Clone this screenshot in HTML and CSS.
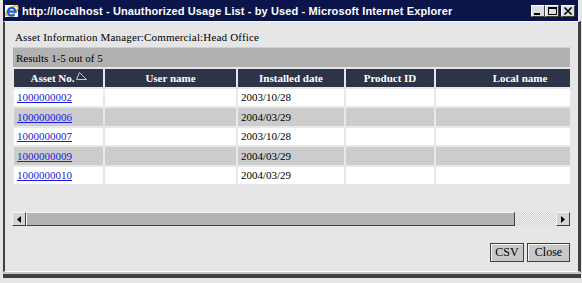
FILE: index.html
```html
<!DOCTYPE html>
<html lang="en">
<head>
  <meta charset="UTF-8" />
  <title>Unauthorized Usage List - by Used</title>
  <link rel="stylesheet" href="styles.css">
</head>
<body>
  <div class="window">
    <!-- Title bar -->
    <div class="titlebar">
      <svg class="app-icon" width="16" height="16" viewBox="0 0 16 16">
        <rect x="1" y="2" width="13" height="12" fill="#ffffff" />
        <ellipse cx="8" cy="8" rx="7.2" ry="3.2" transform="rotate(-35 8 8)" fill="none" stroke="#e0a818" stroke-width="1.3" />
        <path d="M4 8.6h7.6a3.9 3.9 0 1 0 -1.1 2.9" fill="none" stroke="#1f5fd0" stroke-width="2.3" />
      </svg>
      <span class="title">http://localhost - Unauthorized Usage List - by Used - Microsoft Internet Explorer</span>
      <div class="caption-buttons">
        <span class="cbtn">
          <svg width="12" height="10" viewBox="0 0 12 10"><rect x="2" y="7" width="6" height="2" fill="#000" /></svg>
        </span>
        <span class="cbtn">
          <svg width="12" height="10" viewBox="0 0 12 10"><path d="M2.5 1.5h8v7h-8z" fill="none" stroke="#000" /><rect x="2" y="1" width="9" height="2" fill="#000" /></svg>
        </span>
        <span class="cbtn cbtn-close">
          <svg width="12" height="10" viewBox="0 0 12 10"><path d="M2.5 1.5l7 7M9.5 1.5l-7 7" stroke="#000" stroke-width="1.6" /></svg>
        </span>
      </div>
    </div>

    <!-- Page -->
    <div class="client">
      <p class="breadcrumb">Asset Information Manager:Commercial:Head Office</p>
      <div class="results">Results 1-5 out of 5</div>

      <div class="grid-view">
        <table class="grid">
          <colgroup>
            <col class="c-asset" />
            <col class="c-user" />
            <col class="c-date" />
            <col class="c-product" />
            <col class="c-local" />
          </colgroup>
          <thead>
            <tr>
              <th>Asset No.<svg class="sort" width="11" height="8" viewBox="0 0 11 8"><path d="M3.5 0.5L0.5 7.5H10.5Z" fill="none" stroke="#c8c8c8" /></svg></th>
              <th>User name</th>
              <th>Installed date</th>
              <th>Product ID</th>
              <th>Local name</th>
            </tr>
          </thead>
          <tbody>
            <tr>
              <td><a href="#">1000000002</a></td>
              <td></td>
              <td>2003/10/28</td>
              <td></td>
              <td></td>
            </tr>
            <tr>
              <td><a href="#">1000000006</a></td>
              <td></td>
              <td>2004/03/29</td>
              <td></td>
              <td></td>
            </tr>
            <tr>
              <td><a href="#">1000000007</a></td>
              <td></td>
              <td>2003/10/28</td>
              <td></td>
              <td></td>
            </tr>
            <tr>
              <td><a href="#">1000000009</a></td>
              <td></td>
              <td>2004/03/29</td>
              <td></td>
              <td></td>
            </tr>
            <tr>
              <td><a href="#">1000000010</a></td>
              <td></td>
              <td>2004/03/29</td>
              <td></td>
              <td></td>
            </tr>
          </tbody>
        </table>
      </div>

      <!-- Horizontal scrollbar -->
      <div class="hscroll">
        <span class="sb-btn">
          <svg width="4" height="7" viewBox="0 0 4 7"><path d="M4 0v7L0 3.5z" fill="#000" /></svg>
        </span>
        <span class="sb-thumb"></span>
        <span class="sb-track"></span>
        <span class="sb-btn">
          <svg width="4" height="7" viewBox="0 0 4 7"><path d="M0 0v7l4-3.5z" fill="#000" /></svg>
        </span>
      </div>

      <div class="actions">
        <button class="btn btn-csv">CSV</button>
        <button class="btn btn-close">Close</button>
      </div>
    </div>
    <div class="frame-bottom"></div>
  </div>
</body>
</html>
```

FILE: styles.css
```css
/* Classic IE popup window look */
* {
  margin: 0;
  padding: 0;
  box-sizing: border-box;
}
body {
  background: #e6e6e6;
  font-family: 'Liberation Serif', serif;
  font-size: 11px;
  color: #000;
}
.window {
  width: 582px;
  height: 283px;
  display: flex;
  flex-direction: column;
  padding-left: 3px;
  padding-right: 1px;
  background: #e6e6e6;
  overflow: hidden;
}

/* Title bar */
.titlebar {
  height: 21px;
  margin-right: 3px;
  flex-shrink: 0;
  display: flex;
  align-items: center;
  background: #0b154a;
  color: #fff;
}
.app-icon {
  margin-left: 1px;
  flex-shrink: 0;
}
.title {
  margin-left: 2px;
  font-family: 'Liberation Sans', sans-serif;
  font-weight: bold;
  font-size: 11px;
  letter-spacing: 0.12px;
  white-space: nowrap;
}
.caption-buttons {
  margin-left: auto;
  margin-right: 3px;
  display: flex;
}
.cbtn {
  width: 14px;
  height: 12px;
  display: flex;
  align-items: center;
  justify-content: center;
  background: #dcdcdc;
  border: 1px solid;
  border-color: #ffffff #404040 #404040 #ffffff;
}
.cbtn-close {
  margin-left: 2px;
}

/* Client area */
.client {
  flex: 1;
  display: flex;
  flex-direction: column;
  border-top: 1px solid #f4f4f4;
  border-left: 2px solid #404040;
  border-right: 3px solid #404040;
  border-bottom: 1px solid #fafafa;
  padding: 0 8px 0 7px;
}
.breadcrumb {
  padding: 8px 0 0 3px;
  line-height: 14px;
  letter-spacing: 0.17px;
}
.results {
  margin-top: 3px;
  margin-left: 1px;
  height: 20px;
  line-height: 20px;
  padding-left: 3px;
  background: #b1b1b1;
  border-top: 1px solid #cfcfcf;
}
.grid-view {
  height: 145px;
  overflow: hidden;
}
.grid {
  table-layout: fixed;
  width: 594px;
  border-spacing: 2px;
  background: #e8e8e8;
}
.c-asset { width: 89px; }
.c-user { width: 131px; }
.c-date { width: 106px; }
.c-product { width: 88px; }
.c-local { width: 168px; }
.grid th {
  height: 17.5px;
  background: #2e3447;
  color: #fff;
  font-weight: bold;
  text-align: center;
  white-space: nowrap;
}
.sort {
  margin-left: 1px;
  vertical-align: 2px;
}
.grid td {
  height: 17.5px;
  padding-left: 3px;
  background: #fff;
  white-space: nowrap;
}
.grid tbody tr:nth-child(even) td {
  background: #cccccc;
}
.grid a {
  color: #1a1ae0;
}

/* Fake horizontal scrollbar */
.hscroll {
  display: flex;
  height: 14px;
}
.sb-btn {
  width: 14px;
  display: flex;
  align-items: center;
  justify-content: center;
  background: #d4d4d4;
  border: 1px solid;
  border-color: #f4f4f4 #404040 #404040 #f4f4f4;
}
.sb-thumb {
  flex: 0 0 489px;
  background: #b4b4b4;
  border: 1px solid;
  border-color: #f4f4f4 #404040 #404040 #f4f4f4;
}
.sb-track {
  flex: 1;
  background: repeating-conic-gradient(#f4f4f4 0 25%, #d0d0d0 0 50%) 0 0 / 2px 2px;
}

.actions {
  margin-top: 17px;
  display: flex;
  justify-content: flex-end;
  gap: 3px;
}
.btn {
  height: 19px;
  font-family: 'Liberation Serif', serif;
  font-size: 12px;
  background: #c8c8c8;
  border: 1px solid #404040;
  box-shadow: inset 1px 1px 0 #f4f4f4;
}
.btn-csv { width: 34px; }
.btn-close { width: 43px; }

.frame-bottom {
  height: 11px;
  flex-shrink: 0;
  border-top: 2px solid #c8c8c8;
  border-bottom: 5px solid #e6e6e6;
  background: #404040;
}
```
